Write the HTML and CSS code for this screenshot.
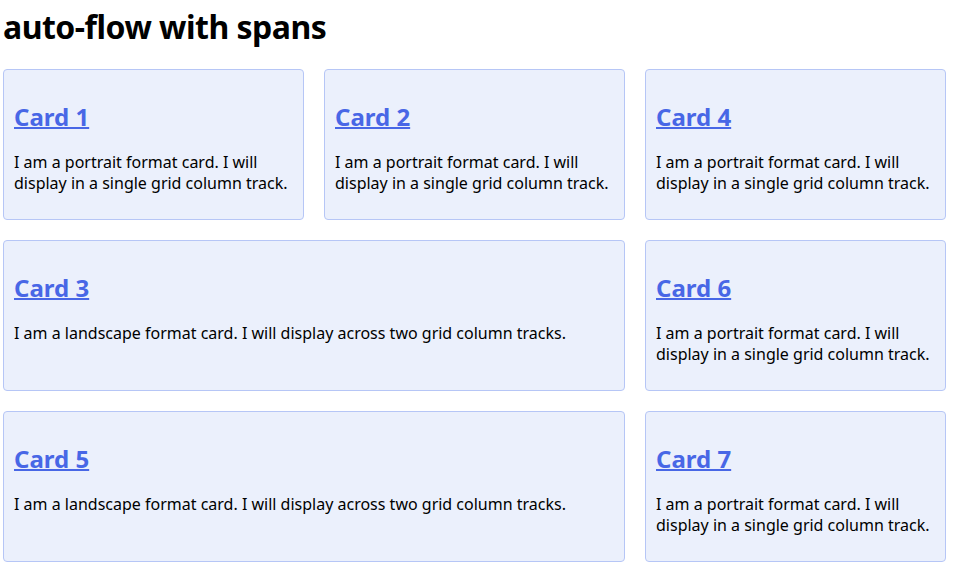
FILE: index.html
```html
<!DOCTYPE html>
<html lang="en">
<head>
<meta charset="utf-8">
<title>auto-flow with spans</title>
<link rel="stylesheet" href="styles.css">
</head>
<body>
<h1 class="title">auto-flow with spans</h1>
<div class="grid">
  <div class="card"><h2><a href="#">Card 1</a></h2><p>I am a portrait format card. I will display in a single grid column track.</p></div>
  <div class="card"><h2><a href="#">Card 2</a></h2><p>I am a portrait format card. I will display in a single grid column track.</p></div>
  <div class="card wide"><h2><a href="#">Card 3</a></h2><p>I am a landscape format card. I will display across two grid column tracks.</p></div>
  <div class="card"><h2><a href="#">Card 4</a></h2><p>I am a portrait format card. I will display in a single grid column track.</p></div>
  <div class="card wide"><h2><a href="#">Card 5</a></h2><p>I am a landscape format card. I will display across two grid column tracks.</p></div>
  <div class="card"><h2><a href="#">Card 6</a></h2><p>I am a portrait format card. I will display in a single grid column track.</p></div>
  <div class="card"><h2><a href="#">Card 7</a></h2><p>I am a portrait format card. I will display in a single grid column track.</p></div>
</div>
</body>
</html>
```
FILE: styles.css
```css
html, body {
  margin: 0;
  background: #fff;
}
body {
  padding: 0 8px 0 3px;
  font-family: "Noto Sans", sans-serif;
  color: #000;
}
.title {
  margin: 7px 0 22px;
  font-size: 32px;
  line-height: 40px;
  font-weight: 700;
  letter-spacing: -0.5px;
}
.grid {
  display: grid;
  grid-template-columns: repeat(3, 1fr);
  grid-auto-flow: dense;
  gap: 20px;
}
.card {
  background: #ebf0fc;
  border: 1px solid #b6c6f6;
  border-radius: 4px;
  padding: 0 10px;
}
.card.wide {
  grid-column: span 2;
}
.card h2 {
  margin: 31px 0 19px;
  font-size: 24px;
  line-height: 32px;
  font-weight: 700;
}
.card h2 a {
  color: #4867e6;
  text-decoration: underline;
  text-decoration-thickness: 2px;
}
.card p {
  margin: 0 0 25px;
  font-size: 16px;
  line-height: 21px;
}
```
